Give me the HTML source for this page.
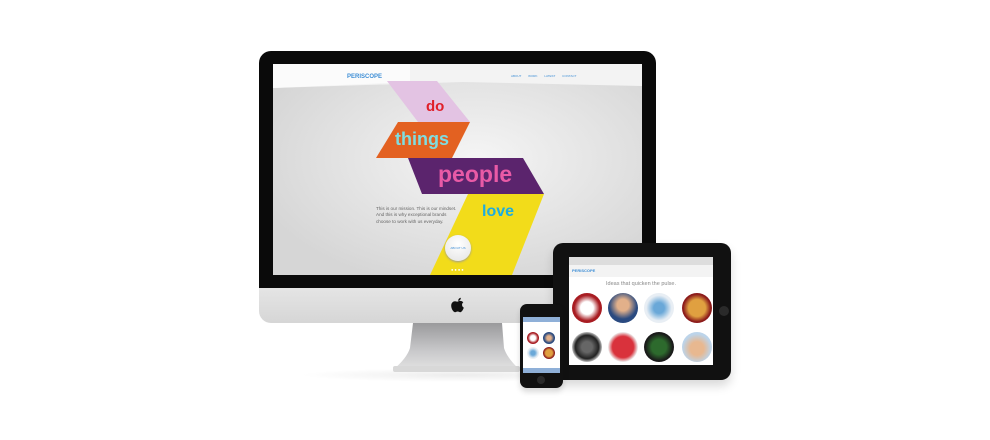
<!DOCTYPE html>
<html><head><style>
body{margin:0;width:990px;height:440px;background:#fff;position:relative;overflow:hidden;font-family:"Liberation Sans",sans-serif}
.a{position:absolute}
</style></head><body>
<div class="a" style="left:300px;top:368px;width:320px;height:14px;border-radius:50%;background:radial-gradient(ellipse,#ececec,#fff 70%)"></div>
<svg class="a" style="left:385px;top:318px" width="145" height="60">
<defs><linearGradient id="st" x1="0" x2="0" y1="0" y2="1"><stop offset="0" stop-color="#9a9a9c"/><stop offset="0.6" stop-color="#c9c9cb"/><stop offset="1" stop-color="#e2e2e2"/></linearGradient></defs>
<path d="M28 5 L117 5 L119 30 Q122 40 135 52 L8 52 Q22 40 25 30 Z" fill="url(#st)"/>
<rect x="8" y="48" width="127" height="6" rx="2" fill="#d8d8d8"/>
</svg>
<div class="a" style="left:259px;top:280px;width:397px;height:43px;border-radius:0 0 12px 12px;background:linear-gradient(#e8e8e8,#d6d6d6)"></div>
<div class="a" style="left:259px;top:51px;width:397px;height:237px;border-radius:12px 12px 0 0;background:#0a0a0a"></div>
<svg class="a" style="left:450px;top:297px" width="16" height="18" viewBox="0 0 16 18">
<path d="M8 4.5 C9.5 3.5 12 3.6 13.3 5.4 C11.5 6.6 11.6 9.6 13.8 10.6 C13.1 12.8 11.6 15.3 10.1 15.2 C9 15.1 8.8 14.5 7.6 14.5 C6.4 14.5 6 15.2 5 15.2 C3.4 15.2 1.2 11.8 1.2 8.8 C1.2 5.6 3.3 4.2 5 4.2 C6.3 4.2 7 4.9 8 4.5 Z M8.2 3.9 C8.1 2.4 9.3 0.9 10.8 0.8 C11 2.4 9.6 4 8.2 3.9 Z" fill="#111"/>
</svg>
<div class="a" style="left:273px;top:64px;width:369px;height:211px;overflow:hidden;background:radial-gradient(ellipse at 55% 45%,#f5f5f5,#d6d6d6 80%)">
  <svg class="a" style="left:0;top:0" width="369" height="211">
    <polygon points="0,0 369,0 369,22 190,18 0,24" fill="#f3f3f3"/>
    <polygon points="0,0 137,0 137,18 0,24" fill="#fbfbfb"/>
    <polygon points="114,17 164,17 197,58 145,58" fill="#e3c3e3"/>
    <polygon points="125,58 197,58 179,94 103,94" fill="#e36121"/>
    <polygon points="135,94 250,94 271,130 149,130" fill="#5b246d"/>
    <polygon points="195,130 271,130 239,211 157,211" fill="#f2dc1a"/>
  </svg>
  <div class="a" style="left:74px;top:10px;font-size:6px;color:#3f8fd6;font-weight:bold">PERISCOPE</div>
  <div class="a" style="left:238px;top:10px;font-size:3px;color:#3f8fd6;word-spacing:6px">ABOUT WORK LATEST CONTACT</div>
  <div class="a" style="left:153px;top:34px;font-size:15px;font-weight:bold;color:#e0202a">do</div>
  <div class="a" style="left:122px;top:65px;font-size:18px;font-weight:bold;color:#7fdde0">things</div>
  <div class="a" style="left:165px;top:97px;font-size:23px;font-weight:bold;color:#e95aa6">people</div>
  <div class="a" style="left:209px;top:139px;font-size:16px;font-weight:bold;color:#1dace0">love</div>
  <div class="a" style="left:103px;top:142px;font-size:4.6px;line-height:6.3px;color:#666;width:100px;white-space:nowrap">This is our mission. This is our mindset.<br>And this is why exceptional brands<br>choose to work with us everyday.</div>
  <div class="a" style="left:172px;top:171px;width:26px;height:26px;border-radius:50%;background:radial-gradient(circle at 50% 35%,#fff,#e3e3e3);box-shadow:0 1px 2px #999;font-size:3px;color:#3f8fd6;text-align:center;line-height:26px">ABOUT US</div>
  <div class="a" style="left:178px;top:203px;font-size:4px;color:#fff;letter-spacing:1px">●●●●</div>
</div>
<div class="a" style="left:553px;top:243px;width:178px;height:137px;border-radius:10px;background:#111;box-shadow:0 6px 10px rgba(0,0,0,.15)"></div>
<div class="a" style="left:719px;top:306px;width:10px;height:10px;border-radius:50%;background:#2a2a2a"></div>
<div class="a" style="left:569px;top:257px;width:144px;height:108px;background:#fff;overflow:hidden">
  <div class="a" style="left:0;top:0;width:144px;height:8px;background:#ddd"></div>
  <div class="a" style="left:0;top:8px;width:144px;height:12px;background:#f3f3f3"></div>
  <div class="a" style="left:3px;top:11px;font-size:4px;color:#3f8fd6;font-weight:bold">PERISCOPE</div>
  <div class="a" style="left:0;top:24px;width:144px;text-align:center;font-size:5.5px;color:#888">Ideas that quicken the pulse.</div>
  <div class="a" style="left:3px;top:36px;width:30px;height:30px;border-radius:50%;background:radial-gradient(circle,#fff 30%,#a81c22 60%)"></div>
  <div class="a" style="left:39px;top:36px;width:30px;height:30px;border-radius:50%;background:radial-gradient(circle at 50% 40%,#e2b08a 25%,#2a4a80 60%)"></div>
  <div class="a" style="left:75px;top:36px;width:30px;height:30px;border-radius:50%;background:radial-gradient(circle,#6aa8d8 25%,#e8eef4 60%)"></div>
  <div class="a" style="left:113px;top:36px;width:30px;height:30px;border-radius:50%;background:radial-gradient(circle,#e0a040 40%,#8c1b1b 65%)"></div>
  <div class="a" style="left:3px;top:75px;width:30px;height:30px;border-radius:50%;background:radial-gradient(circle,#666 25%,#222 55%,#eee 75%)"></div>
  <div class="a" style="left:39px;top:75px;width:30px;height:30px;border-radius:50%;background:radial-gradient(circle,#d9323c 50%,#eee 70%)"></div>
  <div class="a" style="left:75px;top:75px;width:30px;height:30px;border-radius:50%;background:radial-gradient(circle,#2d6a2d 35%,#1a1a1a 65%)"></div>
  <div class="a" style="left:113px;top:75px;width:30px;height:30px;border-radius:50%;background:radial-gradient(circle at 50% 55%,#e8b890 30%,#bcd4ea 65%)"></div>
</div>
<div class="a" style="left:520px;top:304px;width:43px;height:84px;border-radius:7px;background:#111;box-shadow:0 4px 6px rgba(0,0,0,.15)"></div>
<div class="a" style="left:537px;top:376px;width:8px;height:8px;border-radius:50%;background:#2a2a2a"></div>
<div class="a" style="left:523px;top:317px;width:37px;height:56px;background:#fff;overflow:hidden">
  <div class="a" style="left:0;top:0;width:37px;height:5px;background:#8fb0d8"></div>
  <div class="a" style="left:4px;top:15px;width:12px;height:12px;border-radius:50%;background:radial-gradient(circle,#fff 30%,#a81c22 60%)"></div>
  <div class="a" style="left:20px;top:15px;width:12px;height:12px;border-radius:50%;background:radial-gradient(circle,#e2b08a 25%,#2a4a80 60%)"></div>
  <div class="a" style="left:4px;top:30px;width:12px;height:12px;border-radius:50%;background:radial-gradient(circle,#6aa8d8 25%,#e8eef4 60%)"></div>
  <div class="a" style="left:20px;top:30px;width:12px;height:12px;border-radius:50%;background:radial-gradient(circle,#e0a040 40%,#8c1b1b 65%)"></div>
  <div class="a" style="left:0;top:51px;width:37px;height:5px;background:#8fb0d8"></div>
</div>
</body></html>
